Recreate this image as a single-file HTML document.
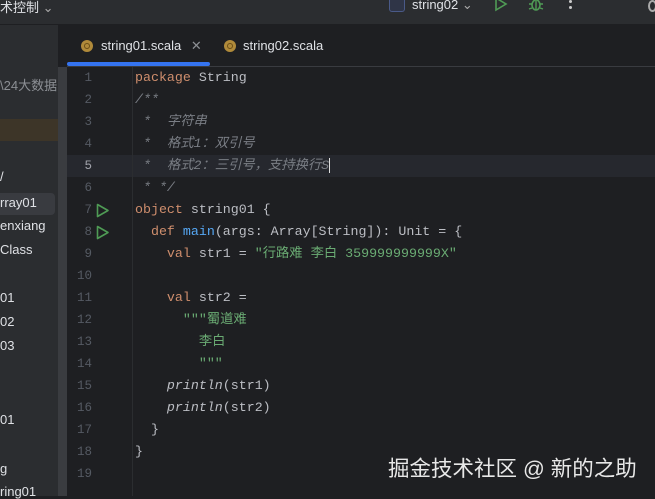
<!DOCTYPE html>
<html><head><meta charset="utf-8"><style>
*{margin:0;padding:0;box-sizing:border-box}
body{width:655px;height:496px;overflow:hidden;background:#1e1f22;position:relative;font-family:"Liberation Sans","Noto Sans CJK SC",sans-serif}
.top{position:absolute;left:0;top:0;width:655px;height:25px;background:#2b2d30;border-bottom:1px solid #1e1f22}
.side{position:absolute;left:0;top:25px;width:58px;height:471px;background:#2b2d30;color:#dfe1e5;font-size:13px}
.sb{position:absolute;left:58px;top:67px;width:9px;height:429px;background:#3a3c40}
.side div{position:absolute;left:0;white-space:nowrap}
.tabs{position:absolute;left:67px;top:25px;width:588px;height:42px;background:#1e1f22;border-bottom:1px solid #393b40}
.tab{position:absolute;top:13px;font-size:13px;color:#dfe1e5}
.ico{position:absolute;width:12px;height:12px;border-radius:50%;background:#b08a3a;top:15px}
.ico:after{content:"";position:absolute;left:3px;top:3px;width:6px;height:6px;border-radius:50%;border:1.5px solid #6b4e17;box-sizing:border-box}
.ul{position:absolute;left:67px;top:62px;width:143px;height:4px;background:#3574f0;border-radius:2px}
.code{position:absolute;left:0;top:67px;width:655px;font-family:"Liberation Mono","Noto Sans CJK SC",monospace;font-size:13.3px}
.ln{position:absolute;left:67px;width:25px;text-align:right;color:#555a63;font-size:12.5px;line-height:22px;height:22px}
.l{position:absolute;left:135px;height:22px;line-height:22px;color:#bcbec4;white-space:pre}
.k{color:#cf8e6d}.c{color:#7a7e85;font-style:italic}.s{color:#6aab73}.f{color:#56a8f5}.i{font-style:italic}
.run{position:absolute;left:96px}
.wm{position:absolute;left:388px;top:452px;font-size:21.5px;color:#e8e8e8;font-family:"Liberation Sans","Noto Sans CJK SC",sans-serif}
</style></head><body>
<div class="top">
<div style="position:absolute;left:0;top:-3px;font-size:13px;color:#dfe1e5">术控制 <span style="color:#aaa">⌄</span></div>
<div style="position:absolute;left:389px;top:0;width:16px;height:12px;border:1.5px solid #4a5a88;border-top:none;border-radius:0 0 3px 3px;background:#2f3547"></div>
<div style="position:absolute;left:412px;top:-3px;font-size:13px;color:#dfe1e5">string02 <span style="color:#aaa">⌄</span></div>
<svg style="position:absolute;left:494px;top:0" width="14" height="12"><path d="M2 -2 L12 4 L2 10 Z" fill="none" stroke="#4f9b55" stroke-width="1.6"/></svg>
<svg style="position:absolute;left:528px;top:0" width="16" height="12"><ellipse cx="8" cy="5" rx="4" ry="5" fill="none" stroke="#4f9b55" stroke-width="1.6"/><path d="M1 4h3M12 4h3M1 9l3-1M15 9l-3-1M8 1v9" stroke="#4f9b55" stroke-width="1.4"/></svg>
<div style="position:absolute;left:569px;top:0;width:3px;height:3px;background:#ccc;border-radius:50%;box-shadow:0 6px 0 #ccc"></div>
<div style="position:absolute;left:648px;top:0;width:9px;height:12px;border:2px solid #aaa;border-radius:50%"></div>
</div>
<div class="side">
<div style="top:50px;color:#8c8f94">\24大数据1</div>
<div style="top:94px;width:58px;height:22px;background:#3d3528"></div>
<div style="top:144px">/</div>
<div style="top:168px;width:55px;height:22px;background:#393b40;border-radius:0 4px 4px 0;padding-top:2px">rray01</div>
<div style="top:193px">enxiang</div>
<div style="top:217px">Class</div>
<div style="top:265px">01</div>
<div style="top:289px">02</div>
<div style="top:313px">03</div>
<div style="top:387px">01</div>
<div style="top:436px">g</div>
<div style="top:459px">ring01</div>
</div>
<div class="sb"></div>
<div class="tabs">
<div class="ico" style="left:14px"></div><div class="tab" style="left:34px">string01.scala <span style="color:#8c8f94;margin-left:6px">✕</span></div>
<div class="ico" style="left:157px"></div><div class="tab" style="left:176px">string02.scala</div>
</div>
<div class="ul"></div>
<div class="code">
<div style="position:absolute;left:67px;top:88px;width:588px;height:22px;background:#26282e"></div>
<div style="position:absolute;left:132px;top:0;width:1px;height:429px;background:#2b2d30"></div>
<div class="ln" style="top:0">1</div><div class="ln" style="top:22px">2</div><div class="ln" style="top:44px">3</div><div class="ln" style="top:66px">4</div><div class="ln" style="top:88px;color:#a1a3ab">5</div><div class="ln" style="top:110px">6</div><div class="ln" style="top:132px">7</div><div class="ln" style="top:154px">8</div><div class="ln" style="top:176px">9</div><div class="ln" style="top:198px">10</div><div class="ln" style="top:220px">11</div><div class="ln" style="top:242px">12</div><div class="ln" style="top:264px">13</div><div class="ln" style="top:286px">14</div><div class="ln" style="top:308px">15</div><div class="ln" style="top:330px">16</div><div class="ln" style="top:352px">17</div><div class="ln" style="top:374px">18</div><div class="ln" style="top:396px">19</div>
<svg class="run" style="top:136px" width="14" height="15"><path d="M1.5 1.5 L12 7.5 L1.5 13.5 Z" fill="none" stroke="#4f9b55" stroke-width="1.6" stroke-linejoin="round"/></svg>
<svg class="run" style="top:158px" width="14" height="15"><path d="M1.5 1.5 L12 7.5 L1.5 13.5 Z" fill="none" stroke="#4f9b55" stroke-width="1.6" stroke-linejoin="round"/></svg>
<div class="l" style="top:0"><span class="k">package</span> String</div>
<div class="l c" style="top:22px">/**</div>
<div class="l c" style="top:44px"> *  字符串</div>
<div class="l c" style="top:66px"> *  格式1：双引号</div>
<div class="l c" style="top:88px"> *  格式2：三引号，支持换行S<span style="border-left:1.5px solid #ddd"></span></div>
<div class="l c" style="top:110px"> * */</div>
<div class="l" style="top:132px"><span class="k">object</span> string01 {</div>
<div class="l" style="top:154px">  <span class="k">def</span> <span class="f">main</span>(args: Array[String]): Unit = {</div>
<div class="l" style="top:176px">    <span class="k">val</span> str1 = <span class="s">"行路难 李白 359999999999X"</span></div>
<div class="l" style="top:220px">    <span class="k">val</span> str2 =</div>
<div class="l s" style="top:242px">      """蜀道难</div>
<div class="l s" style="top:264px">        李白</div>
<div class="l s" style="top:286px">        """</div>
<div class="l" style="top:308px">    <span class="i">println</span>(str1)</div>
<div class="l" style="top:330px">    <span class="i">println</span>(str2)</div>
<div class="l" style="top:352px">  }</div>
<div class="l" style="top:374px">}</div>
</div>
<div class="wm">掘金技术社区 @ 新的之助</div>
</body></html>
